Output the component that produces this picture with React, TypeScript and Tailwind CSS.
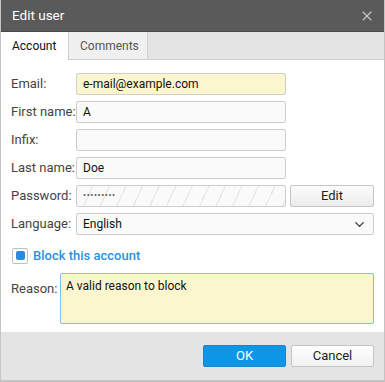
import { ChevronDown, X } from 'lucide-react';

// ─── FORM ROWS ───

const fields = [
  { label: 'Email:', value: 'e-mail@example.com', tone: 'yellow' },
  { label: 'First name:', value: 'A' },
  { label: 'Infix:', value: '' },
  { label: 'Last name:', value: 'Doe' },
];

const stripes =
  'repeating-linear-gradient(115deg, transparent 0px, transparent 14px, #e4e4e4 14px, #e4e4e4 15px)';

function Label({ children }: { children: React.ReactNode }) {
  return <span className="w-[65px] shrink-0 text-[13px] text-[#444]">{children}</span>;
}

export default function App() {
  return (
    <div
      className="w-[385px] h-[382px] flex flex-col bg-white border-x border-b-2 border-[#c4c4c4] overflow-hidden"
      style={{ fontFamily: 'Roboto, "Noto Sans", sans-serif' }}
    >
      {/* Title bar */}
      <div className="h-[32px] shrink-0 flex items-center justify-between pl-[11px] pr-[9px] bg-[#5a5a5a] border-b border-[#474747]">
        <span className="text-[13.5px] text-white">Edit user</span>
        <X className="w-[16px] h-[16px] text-[#c8c8c8]" strokeWidth={1.6} />
      </div>

      {/* Tabs */}
      <div className="h-[28px] shrink-0 flex bg-[#e4e4e4] border-b border-[#cfcfcf]">
        <div className="w-[67px] -mb-px flex items-center pl-[11px] bg-white text-[12px] text-[#111]">Account</div>
        <div className="w-[80px] flex items-center pl-[11px] bg-[#f0f0f0] border-x border-[#cfcfcf] text-[12px] text-[#555]">
          Comments
        </div>
      </div>

      {/* Form */}
      <div className="flex-1 flex flex-col gap-[6px] pt-[13px] pl-[10px] pr-[10px]">
        {fields.map((f) => (
          <div key={f.label} className="flex items-center">
            <Label>{f.label}</Label>
            <div
              className={`w-[210px] h-[22px] flex items-center px-[6px] rounded-[2px] border text-[12px] text-[#111] ${
                f.tone === 'yellow' ? 'bg-[#fcf6cf] border-[#cfcfcf]' : 'bg-[#fafafa] border-[#cccccc]'
              }`}
            >
              {f.value}
            </div>
          </div>
        ))}

        <div className="flex items-center">
          <Label>Password:</Label>
          <div
            className="w-[210px] h-[22px] flex items-center px-[6px] rounded-[2px] border border-[#cccccc] bg-[#fafafa] text-[9px] text-[#555] tracking-[0.6px]"
            style={{ backgroundImage: stripes }}
          >
            •••••••••
          </div>
          <button className="ml-[4px] w-[84px] h-[22px] rounded-[2px] border border-[#c6c6c6] bg-gradient-to-b from-[#fbfbfb] to-[#ececec] text-[13px] text-[#222]">
            Edit
          </button>
        </div>

        <div className="flex items-center">
          <Label>Language:</Label>
          <div className="w-[298px] h-[22px] flex items-center justify-between px-[6px] rounded-[2px] border border-[#cccccc] bg-[#fafafa] text-[12px] text-[#111]">
            English
            <ChevronDown className="w-[15px] h-[15px] text-[#333]" strokeWidth={2} />
          </div>
        </div>

        <div className="flex items-center gap-[5px] mt-[5px] ml-[1px]">
          <div className="w-[16px] h-[16px] flex items-center justify-center rounded-[2px] border border-[#bdbdbd] bg-white">
            <div className="w-[9px] h-[9px] rounded-[2px] bg-[#2a8ae0]" />
          </div>
          <span className="text-[13px] font-medium text-[#2b90e0]">Block this account</span>
        </div>

        <div className="flex items-start mt-[1px]">
          <span className="w-[49px] shrink-0 pt-[6px] text-[13px] text-[#444]">Reason:</span>
          <div className="w-[314px] h-[51px] px-[5px] pt-[3px] rounded-[2px] border border-[#86bdf0] bg-[#fcf6cf] text-[12px] text-[#111]">
            A valid reason to block
          </div>
        </div>
      </div>

      {/* Footer */}
      <div className="h-[48px] shrink-0 flex items-center justify-end gap-[5px] pr-[10px] bg-[#e4e4e4]">
        <button className="w-[83px] h-[22px] rounded-[2px] border border-[#1a82cf] bg-[#0d96e6] text-[13px] text-white">
          OK
        </button>
        <button className="w-[83px] h-[22px] rounded-[2px] border border-[#c6c6c6] bg-gradient-to-b from-white to-[#f0f0f0] text-[13px] text-[#222]">
          Cancel
        </button>
      </div>
    </div>
  );
}
